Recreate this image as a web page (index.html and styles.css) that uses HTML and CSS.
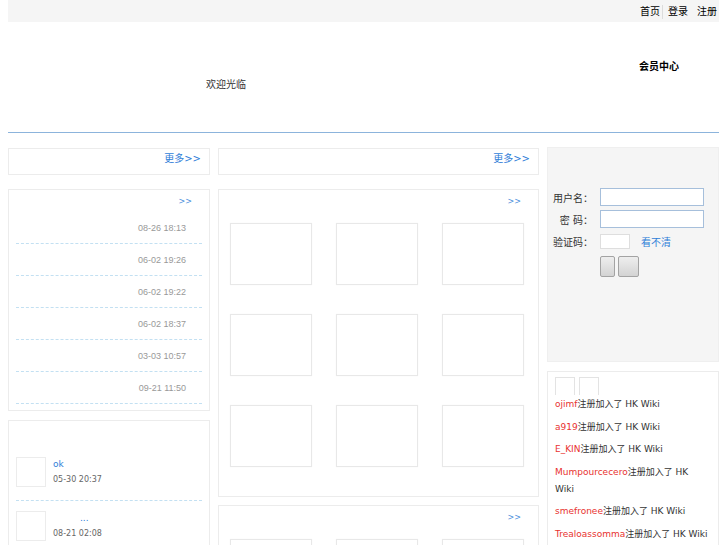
FILE: index.html
```html
<!DOCTYPE html>
<html lang="zh-CN">
<head>
<meta charset="utf-8">
<title>HK Wiki</title>
<link rel="stylesheet" href="styles.css">
</head>
<body>
<div class="page">
  <div class="topbar">
    <a class="top-link">首页</a>
    <span class="top-sep"></span>
    <a class="top-link l2">登录</a>
    <a class="top-link l3">注册</a>
  </div>
  <div class="header">
    <div class="welcome">欢迎光临</div>
    <div class="member">会员中心</div>
  </div>
  <div class="main">
    <div class="col col-left">
      <div class="box box-more"><a class="more">更多&gt;&gt;</a></div>
      <div class="box box-dates">
        <div class="box-title"><a class="arrows">&gt;&gt;</a></div>
        <ul class="date-list">
          <li><span class="date">08-26 18:13</span></li>
          <li><span class="date">06-02 19:26</span></li>
          <li><span class="date">06-02 19:22</span></li>
          <li><span class="date">06-02 18:37</span></li>
          <li><span class="date">03-03 10:57</span></li>
          <li><span class="date">09-21 11:50</span></li>
        </ul>
      </div>
      <div class="box box-comments">
        <ul class="comment-list">
          <li class="comment">
            <span class="avatar"></span>
            <div class="comment-body">
              <a class="comment-name">ok</a>
              <div class="comment-date">05-30 20:37</div>
            </div>
          </li>
          <li class="comment">
            <span class="avatar"></span>
            <div class="comment-body">
              <a class="comment-name indent">...</a>
              <div class="comment-date">08-21 02:08</div>
            </div>
          </li>
        </ul>
      </div>
    </div>
    <div class="col col-mid">
      <div class="box box-more"><a class="more">更多&gt;&gt;</a></div>
      <div class="box box-gallery">
        <div class="box-title"><a class="arrows">&gt;&gt;</a></div>
        <div class="thumbs">
          <span class="thumb"></span><span class="thumb"></span><span class="thumb"></span>
          <span class="thumb"></span><span class="thumb"></span><span class="thumb"></span>
          <span class="thumb"></span><span class="thumb"></span><span class="thumb"></span>
        </div>
      </div>
      <div class="box box-gallery">
        <div class="box-title"><a class="arrows">&gt;&gt;</a></div>
        <div class="thumbs">
          <span class="thumb"></span><span class="thumb"></span><span class="thumb"></span>
        </div>
      </div>
    </div>
    <div class="col col-right">
      <div class="box login">
        <div class="form-row">
          <label class="form-label">用户名：</label>
          <span class="input"></span>
        </div>
        <div class="form-row">
          <label class="form-label">密 码：</label>
          <span class="input"></span>
        </div>
        <div class="form-row row-code">
          <label class="form-label">验证码：</label>
          <span class="input-code"></span>
          <a class="code-link">看不清</a>
        </div>
        <div class="form-row row-btns">
          <span class="form-label"></span>
          <button class="btn btn-small" type="button"></button>
          <button class="btn" type="button"></button>
        </div>
      </div>
      <div class="box box-members">
        <div class="tabs"><span class="tab"></span><span class="tab"></span></div>
        <ul class="member-list">
          <li><a class="user">ojimf</a>注册加入了 HK Wiki</li>
          <li><a class="user">a919</a>注册加入了 HK Wiki</li>
          <li><a class="user">E_KIN</a>注册加入了 HK Wiki</li>
          <li><a class="user">Mumpourcecero</a>注册加入了 HK Wiki</li>
          <li><a class="user">smefronee</a>注册加入了 HK Wiki</li>
          <li><a class="user">Trealoassomma</a>注册加入了 HK Wiki</li>
        </ul>
      </div>
    </div>
  </div>
</div>
</body>
</html>
```

FILE: styles.css
```css
* { box-sizing: border-box; }
html, body { margin: 0; padding: 0; background: #fff; }
body {
  font-family: "DejaVu Sans", "Noto Sans CJK SC", sans-serif;
  font-size: 10px;
  color: #333;
}
ul { list-style: none; margin: 0; padding: 0; }
a { text-decoration: none; cursor: pointer; }

.page { margin: 0 8px; width: 711px; }

/* top bar */
.topbar {
  height: 22px;
  background: #f5f5f5;
  display: flex;
  justify-content: flex-end;
  align-items: center;
  padding: 2px 2px 0 0;
}
.top-link { color: #000; font-size: 10px; line-height: 12px; }
.top-sep { width: 1px; height: 14px; background: #dcdcdc; margin-left: 2px; }
.l2 { margin-left: 5px; }
.l3 { margin-left: 9px; }

/* header */
.header {
  height: 111px;
  display: flex;
  border-bottom: 1px solid #8cb4dc;
}
.welcome {
  margin-left: 198px;
  padding-top: 57px;
  font-size: 10px;
  line-height: 12px;
  color: #333;
}
.member {
  margin-left: auto;
  margin-right: 40px;
  padding-top: 39px;
  font-size: 10px;
  line-height: 12px;
  font-weight: bold;
  color: #000;
}

/* main */
.main {
  display: flex;
  gap: 8px;
  margin-top: 15px;
  align-items: flex-start;
}
.col { display: flex; flex-direction: column; }
.col-left { width: 202px; }
.col-mid { width: 321px; }
.col-right { width: 172px; }

.box { border: 1px solid #ececec; background: #fff; }

.box-more {
  height: 27px;
  display: flex;
  justify-content: flex-end;
  padding: 2px 8px 0 0;
}
.more { color: #2f7ed8; font-size: 10px; line-height: 16px; }

.box-title {
  height: 22px;
  display: flex;
  justify-content: flex-end;
  align-items: center;
  padding-right: 17px;
}
.arrows { color: #4a8fdc; font-size: 8px; }

/* left dates */
.box-dates { margin-top: 14px; height: 222px; }
.date-list { margin: 0 7px; }
.date-list li {
  height: 32px;
  border-bottom: 1px dashed #c3e0f2;
  display: flex;
  justify-content: flex-end;
  align-items: center;
  padding-right: 16px;
}
.date { font-family: "Liberation Sans", Arial, sans-serif; font-size: 9px; color: #999; }

/* left comments */
.box-comments { margin-top: 9px; height: 140px; padding-top: 36px; }
.comment-list { margin: 0 7px; }
.comment { display: flex; padding-bottom: 12px; }
.comment + .comment { border-top: 1px dashed #c3e0f2; padding-top: 10px; }
.avatar { width: 30px; height: 30px; border: 1px solid #ececec; flex: none; }
.comment-body { margin-left: 7px; }
.comment-name { display: block; color: #2f7ed8; font-size: 9px; line-height: 14px; }
.indent { padding-left: 27px; }
.comment-date { font-size: 8px; line-height: 17px; color: #666; }

/* middle gallery */
.box-gallery { margin-top: 14px; padding-bottom: 29px; }
.box-gallery + .box-gallery { margin-top: 8px; }
.box-gallery .box-title { height: 22px; margin-bottom: 11px; }
.thumbs {
  display: grid;
  grid-template-columns: repeat(3, 82px);
  justify-content: space-between;
  row-gap: 29px;
  padding: 0 14px 0 11px;
}
.thumb {
  height: 62px;
  border: 1px solid #e8e8e8;
  box-shadow: 0 0 1px #f0f0f0;
  background: #fff;
}

/* login */
.login {
  height: 215px;
  margin-top: -1px;
  background: #f5f5f5;
  border-color: #efefef;
  padding-top: 40px;
}
.form-row { display: flex; align-items: center; margin-bottom: 4px; }
.form-label {
  width: 45px;
  margin-right: 7px;
  text-align: right;
  font-size: 10px;
  color: #333;
  flex: none;
}
.input {
  width: 104px;
  height: 18px;
  border: 1px solid #a6bfdb;
  background: #fff;
}
.row-code { margin-top: 6px; margin-bottom: 7px; }
.input-code {
  width: 30px;
  height: 15px;
  border: 1px solid #dedede;
  background: #fff;
}
.code-link { margin-left: 11px; color: #2f7ed8; font-size: 10px; }
.btn {
  width: 21px;
  height: 21px;
  padding: 0;
  border: 1px solid #a3a3a3;
  border-radius: 2px;
  background: linear-gradient(#eeeeee, #d3d3d3);
  margin-right: 3px;
}
.btn-small { width: 15px; }

/* members */
.box-members {
  margin-top: 9px;
  padding: 5px 10px 0 7px;
  height: 200px;
}
.tabs { display: flex; gap: 4px; height: 18px; }
.tab {
  width: 20px;
  height: 18px;
  border: 1px solid #e3e3e3;
  border-bottom: none;
}
.member-list { margin-top: 1px; }
.member-list li {
  font-size: 9px;
  line-height: 17px;
  margin-bottom: 5.5px;
  color: #333;
}
.user { color: #e8322f; }
```
